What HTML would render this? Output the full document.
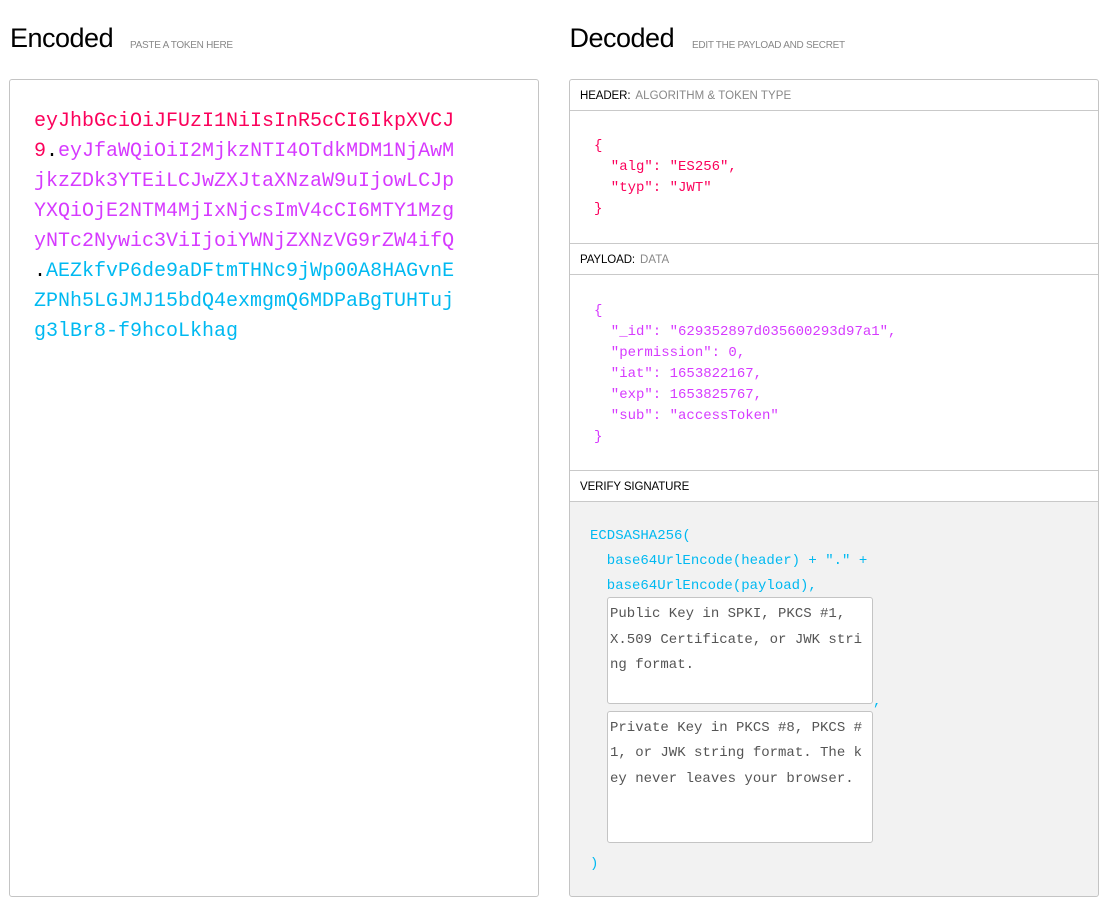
<!DOCTYPE html>
<html><head><meta charset="utf-8">
<style>
html,body{margin:0;padding:0;background:#fff}
body{width:1106px;height:911px;position:relative;overflow:hidden;font-family:"Liberation Sans",sans-serif}
div{position:absolute;white-space:pre;box-sizing:border-box}
.t{font-size:27px;letter-spacing:-.5px;color:#000;top:22px;line-height:32px}
.s{font-size:10px;color:#888;top:38px;line-height:14px;letter-spacing:-.28px;padding-top:.5px}
.box{border:1px solid #c4c4c4;border-radius:3px}
.h{left:1px;width:527px;height:1px;background:#c9c9c9}
.l{font-size:11.5px;line-height:14px;color:#000;letter-spacing:-.1px}
.l span{color:#888;margin-left:5px;letter-spacing:.05px}
.m{font-family:"Liberation Mono",monospace}
.e{font-size:20px;line-height:30px;left:34px;top:107px;color:#fb015b}
.p{color:#d63aff}.c{color:#00b9f1}.k{color:#000}
.j{font-size:14px;line-height:21px;left:594px}
.sig{font-size:14px;line-height:25px;color:#00b9f1}
.ta{background:#fff;border:1px solid #c4c4c4;border-radius:3px;left:607px;width:266px;padding:4px 0 0 2px;font-size:14px;line-height:25.5px;color:#555}
</style></head><body>
<div class="t" style="left:10px">Encoded</div>
<div class="s" style="left:130px">PASTE A TOKEN HERE</div>
<div class="t" style="left:569.5px">Decoded</div>
<div class="s" style="left:692px">EDIT THE PAYLOAD AND SECRET</div>

<div class="box" style="left:9px;top:79px;width:530px;height:818px"></div>
<div class="m e">eyJhbGciOiJFUzI1NiIsInR5cCI6IkpXVCJ
9<span class="k">.</span><span class="p">eyJfaWQiOiI2MjkzNTI4OTdkMDM1NjAwM
jkzZDk3YTEiLCJwZXJtaXNzaW9uIjowLCJp
YXQiOjE2NTM4MjIxNjcsImV4cCI6MTY1Mzg
yNTc2Nywic3ViIjoiYWNjZXNzVG9rZW4ifQ</span>
<span class="k">.</span><span class="c">AEZkfvP6de9aDFtmTHNc9jWp00A8HAGvnE
ZPNh5LGJMJ15bdQ4exmgmQ6MDPaBgTUHTuj
g3lBr8-f9hcoLkhag</span></div>

<div style="left:570px;top:502px;width:528px;height:394px;background:#f2f2f2"></div>
<div class="box" style="left:569px;top:79px;width:530px;height:818px">
<div class="h" style="top:30px;left:0;width:528px"></div>
<div class="h" style="top:163px;left:0;width:528px"></div>
<div class="h" style="top:194px;left:0;width:528px"></div>
<div class="h" style="top:390px;left:0;width:528px"></div>
<div class="h" style="top:421px;left:0;width:528px"></div>
</div>
<div class="l" style="left:580px;top:88.5px">HEADER:<span>ALGORITHM &amp; TOKEN TYPE</span></div>
<div class="l" style="left:580px;top:252.5px">PAYLOAD:<span>DATA</span></div>
<div class="l" style="left:580px;top:479.5px">VERIFY SIGNATURE</div>

<div class="m j" style="top:136px;color:#fb015b">{
  "alg": "ES256",
  "typ": "JWT"
}</div>
<div class="m j" style="top:301px;color:#d63aff">{
  "_id": "629352897d035600293d97a1",
  "permission": 0,
  "iat": 1653822167,
  "exp": 1653825767,
  "sub": "accessToken"
}</div>

<div class="m sig" style="left:590px;top:524px">ECDSASHA256(
  base64UrlEncode(header) + "." +
  base64UrlEncode(payload),</div>
<div class="m ta" style="top:597px;height:107px">Public Key in SPKI, PKCS #1,
X.509 Certificate, or JWK stri
ng format.</div>
<div class="m sig" style="left:873px;top:690px">,</div>
<div class="m ta" style="top:711px;height:132px;padding-top:3.6px">Private Key in PKCS #8, PKCS #
1, or JWK string format. The k
ey never leaves your browser.</div>
<div class="m sig" style="left:590px;top:852px">)</div>
</body></html>
